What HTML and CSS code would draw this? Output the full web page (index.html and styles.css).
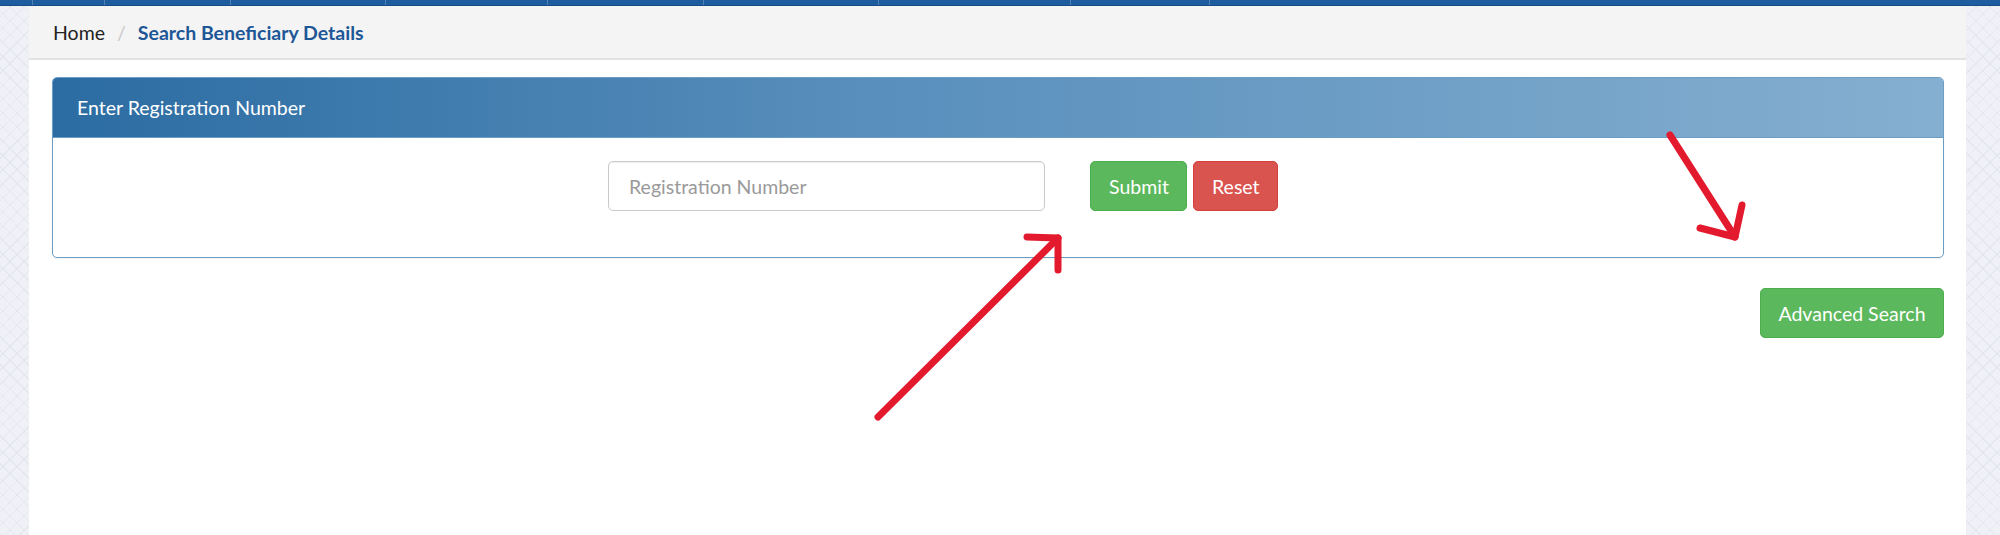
FILE: index.html
```html
<!DOCTYPE html>
<html lang="en">
<head>
<meta charset="utf-8">
<title>Search Beneficiary Details</title>
<link rel="stylesheet" href="styles.css">
</head>
<body>
<div class="topbar">
  <span class="tick" style="left:32px"></span>
  <span class="tick" style="left:104px"></span>
  <span class="tick" style="left:230px"></span>
  <span class="tick" style="left:385px"></span>
  <span class="tick" style="left:547px"></span>
  <span class="tick" style="left:703px"></span>
  <span class="tick" style="left:878px"></span>
  <span class="tick" style="left:1070px"></span>
  <span class="tick" style="left:1209px"></span>
</div>
<div class="page">
  <div class="breadcrumb">
    <span class="crumb">Home</span>
    <span class="sep">/</span>
    <span class="crumb active">Search Beneficiary Details</span>
  </div>
  <div class="content">
    <div class="panel">
      <div class="panel-heading">Enter Registration Number</div>
      <div class="panel-body">
        <form class="search-form">
          <input class="form-control" type="text" placeholder="Registration Number">
          <div class="btns">
            <button type="button" class="btn btn-success">Submit</button>
            <button type="button" class="btn btn-danger">Reset</button>
          </div>
        </form>
      </div>
    </div>
    <div class="actions">
      <button type="button" class="btn btn-success btn-adv">Advanced Search</button>
    </div>
  </div>
</div>
<svg class="annotations" width="2000" height="535" viewBox="0 0 2000 535">
  <g fill="none" stroke="#e31a2e" stroke-width="7" stroke-linecap="round" stroke-linejoin="round">
    <line x1="878" y1="417" x2="1058" y2="238"/>
    <polyline points="1027,237 1058,238 1058,270"/>
    <line x1="1670" y1="135" x2="1735" y2="237"/>
    <polyline points="1700,228 1735,237 1742,205"/>
  </g>
</svg>
</body>
</html>
```

FILE: styles.css
```css
* { box-sizing: border-box; }
html, body { margin: 0; padding: 0; }
body {
  width: 2000px;
  height: 535px;
  overflow: hidden;
  position: relative;
  font-family: Lato, "Open Sans", Arial, sans-serif;
  background-color: #f0f1f6;
  background-image:
    repeating-linear-gradient(45deg, rgba(222,225,235,0.6) 0 1px, transparent 1px 10px),
    repeating-linear-gradient(-45deg, rgba(222,225,235,0.6) 0 1px, transparent 1px 10px);
}
.topbar {
  position: relative;
  height: 6px;
  background: #1c5c9f;
  border-bottom: 1px solid #164c86;
}
.tick {
  position: absolute;
  top: 0;
  width: 1px;
  height: 5px;
  background: #4f82b8;
}
.page {
  margin: 0 34px 0 29px;
  background: #fff;
  height: 529px;
}
.breadcrumb {
  height: 54px;
  background: #f4f4f4;
  border-bottom: 2px solid #e2e2e2;
  display: flex;
  align-items: center;
  padding-left: 24px;
  font-size: 19.5px;
  color: #222;
}
.sep {
  color: #c8c8c8;
  margin: 0 12px 0 12px;
}
.crumb.active {
  color: #1d5797;
  font-weight: bold;
  font-size: 19.5px;
}
.content {
  padding: 17px 22px 0 23px;
}
.panel {
  border: 1px solid #6c9dc5;
  border-radius: 5px;
  box-shadow: 0 1px 2px rgba(0,0,0,0.06);
}
.panel-heading {
  height: 60px;
  border-radius: 4px 4px 0 0;
  background: linear-gradient(90deg, #2b6ca2 0%, #5a90bd 45%, #85afd0 100%);
  border-bottom: 1px solid #6c9dc5;
  color: #fff;
  font-size: 19.5px;
  display: flex;
  align-items: center;
  padding-left: 24px;
}
.panel-body {
  padding: 23px 0 46px;
}
.search-form {
  display: flex;
  align-items: center;
  padding-left: 555px;
}
.form-control {
  width: 437px;
  height: 50px;
  border: 1px solid #c9c9c9;
  border-radius: 5px;
  padding: 0 20px;
  font-family: inherit;
  font-size: 19.5px;
  color: #555;
  box-shadow: inset 0 1px 1px rgba(0,0,0,0.06);
}
.form-control::placeholder { color: #9a9a9a; }
.btns {
  display: flex;
  gap: 6px;
  margin-left: 45px;
}
.btn {
  height: 50px;
  border-radius: 5px;
  color: #fff;
  font-family: inherit;
  font-size: 19.5px;
  padding: 0 18px;
  cursor: pointer;
}
.btn-success {
  background: #5cb85c;
  border: 1px solid #4cae4c;
}
.btn-danger {
  background: #d9534f;
  border: 1px solid #d43f3a;
}
.btns .btn-success { width: 97px; }
.btns .btn-danger { width: 85px; }
.actions {
  display: flex;
  justify-content: flex-end;
  margin-top: 30px;
}
.btn-adv {
  width: 184px;
  padding: 0;
}
.annotations {
  position: absolute;
  left: 0;
  top: 0;
  pointer-events: none;
}
```
